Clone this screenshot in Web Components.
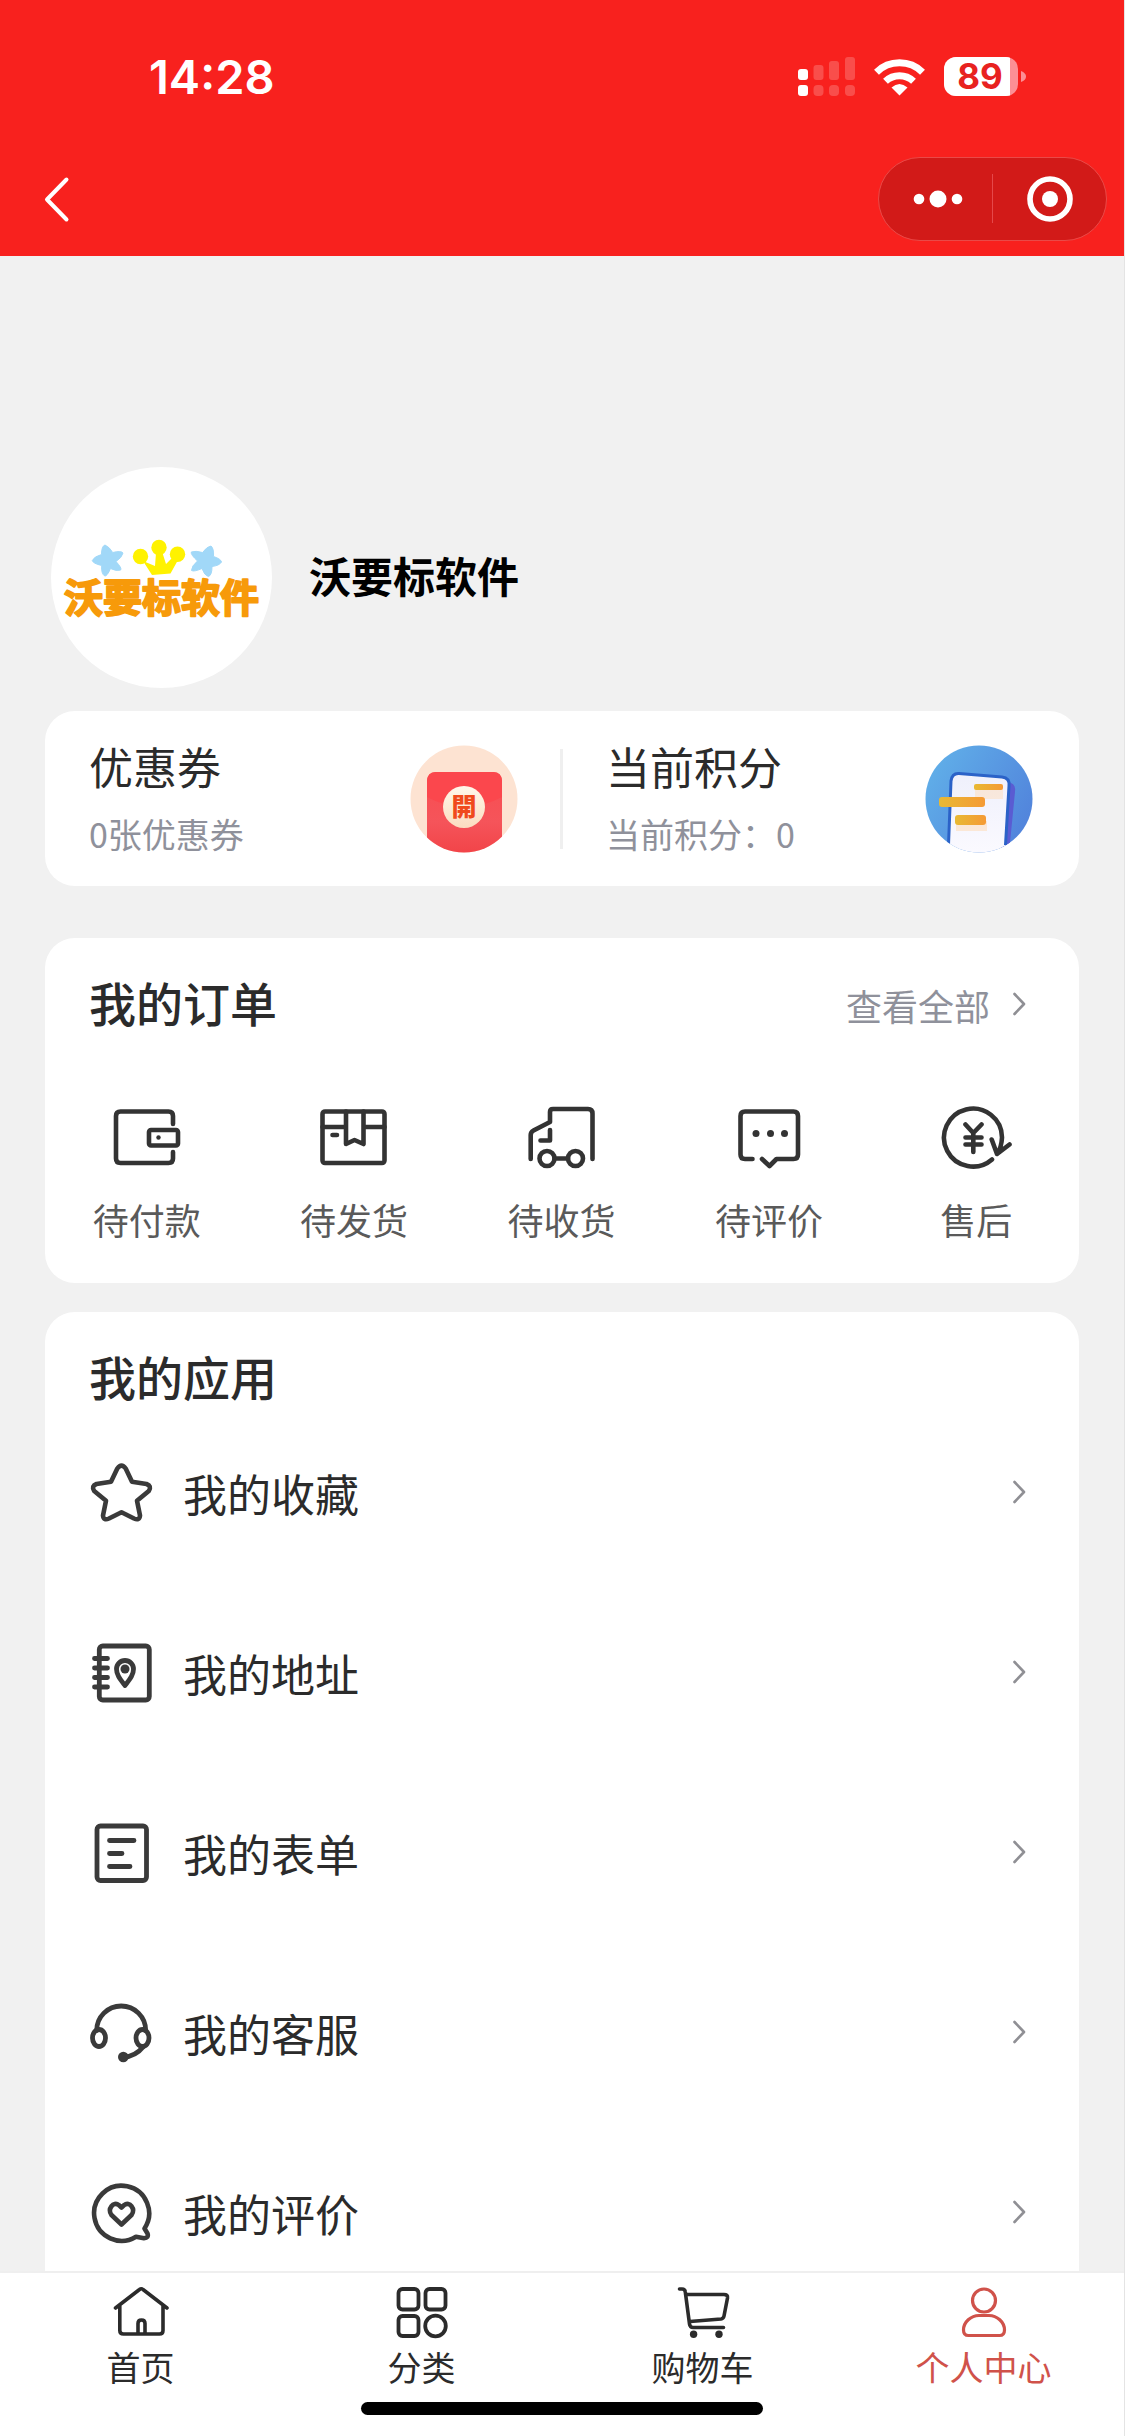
<!DOCTYPE html>
<html lang="zh-CN">
<head>
<meta charset="utf-8">
<meta name="viewport" content="width=device-width, initial-scale=1">
<title>个人中心</title>
<style>
  html, body { margin: 0; height: 100%; }
  body {
    box-sizing: border-box;
    background: #f1f1f1;
    border-right: 1px solid #e4e4e4;
    font-family: "Noto Sans CJK SC", "Noto Sans", sans-serif;
    font-weight: 400;
    color: #2b2b2b;
  }
</style>
</head>
<body>
<member-page>
  <status-bar slot="header" time="14:28" battery="89"></status-bar>
  <nav-bar slot="header"></nav-bar>

  <user-profile name="沃要标软件"></user-profile>

  <asset-panel>
    <asset-item icon="coupon" label="优惠券">0张优惠券</asset-item>
    <asset-item icon="points" label="当前积分">当前积分：0</asset-item>
  </asset-panel>

  <section-card heading="我的订单">
    <more-link slot="action" href="#orders">查看全部</more-link>
    <order-grid>
      <order-item icon="wallet">待付款</order-item>
      <order-item icon="box">待发货</order-item>
      <order-item icon="truck">待收货</order-item>
      <order-item icon="comment">待评价</order-item>
      <order-item icon="refund">售后</order-item>
    </order-grid>
  </section-card>

  <section-card heading="我的应用">
    <app-list>
      <app-row icon="star">我的收藏</app-row>
      <app-row icon="address">我的地址</app-row>
      <app-row icon="form">我的表单</app-row>
      <app-row icon="service">我的客服</app-row>
      <app-row icon="rating">我的评价</app-row>
    </app-list>
  </section-card>

  <tab-bar slot="footer">
    <tab-item icon="home">首页</tab-item>
    <tab-item icon="category">分类</tab-item>
    <tab-item icon="cart">购物车</tab-item>
    <tab-item icon="user" current>个人中心</tab-item>
  </tab-bar>
</member-page>

<script>
const define = (name, render) => customElements.define(name, class extends HTMLElement {
  constructor() { super(); this.attachShadow({ mode: 'open' }); }
  connectedCallback() { this.shadowRoot.innerHTML = render(this); }
});

/* Line icons: [view box side, stroke width, markup] */
const ICONS = {
  wallet: [72, 4.6, `<path d="M62 23V15q0-4.5-4.5-4.5H9.5Q5 10.500 5 15V57.500q0 4.500 4.500 4.500H57.500q4.500 0 4.500-4.500V51"/><rect x="38" y="29" width="29" height="15.500" rx="2"/><circle cx="47.500" cy="36.500" r="2.200" fill="currentColor" stroke="none"/>`],
  box: [72, 4.6, `<rect x="4.500" y="10.500" width="62" height="51.500" rx="2.500"/><path d="M4.500 26H28M45.500 26H66.500M28 10.500V43L36.500 39L45.500 43V10.500M14.500 34H19"/>`],
  truck: [72, 4.6, `<path d="M4.700 58V34Q4.700 31 7.500 29.500L24 21V11Q24 8 27 8H62Q66.500 8 66.500 12.500V58M24 29V39.500H14.500M28.500 57.500H42"/><circle cx="21" cy="57.500" r="7.500"/><circle cx="49.500" cy="57.500" r="7.500"/>`],
  comment: [72, 4.6, `<path d="M19.500 58H12Q7.500 58 7.500 53.500V15Q7.500 10.500 12 10.500H60.500Q65 10.500 65 15V53.500Q65 58 60.500 58H43.500L36.500 65L29 58"/><g fill="currentColor" stroke="none"><circle cx="23" cy="32.500" r="3.500"/><circle cx="37.500" cy="32.500" r="3.500"/><circle cx="51.500" cy="32.500" r="3.500"/></g>`],
  refund: [72, 4.6, `<path d="M52 58.500A29 29 0 1 1 62 36.500Q61.500 46 57.500 52.500M51.700 38.500L57 53L69.500 43.500M25.500 23.500L33.300 32L41.500 23.500M33.300 32V51M25.500 36.500H41.500M25.500 43.500H41.500"/>`],
  star: [64, 4.6, `<path d="M28.300 7.500Q32.500 1.800 36.700 7.500L43 20.700L57.500 23Q63 25 59.800 30L48 39.800L51 54.500Q50.500 60 45 57.500L32.500 51.300L20 57.500Q14.500 60 14 54.500L17 39.800L5.200 30Q2 25 7.500 23L22 20.700Z"/>`],
  address: [64, 4.8, `<rect x="10.300" y="5" width="50" height="54" rx="3.500"/><path d="M5.500 17.500H18.500M5.500 27H18.500M5.500 36.500H18.500M5.500 46H18.500"/><path d="M36 44.500C31 38 27.500 34 27.500 28a8.500 8.500 0 0 1 17 0C44.500 34 41 38 36 44.500Z"/><circle cx="36" cy="28" r="4.500" fill="currentColor" stroke="none"/>`],
  form: [64, 4.8, `<rect x="8" y="5" width="49.500" height="54.500" rx="3.500"/><path d="M20.500 19.500H45M20.500 32.500H33M20.500 45.500H41"/>`],
  service: [64, 4.8, `<path d="M7.700 29.500A24.500 24.500 0 0 1 56.700 29.500"/><ellipse cx="10" cy="37" rx="6.500" ry="8.500"/><ellipse cx="53.500" cy="37" rx="6.500" ry="8.500"/><path d="M54 46Q47 55 34 56.500"/><circle cx="34.300" cy="56" r="5.300" fill="currentColor" stroke="none"/>`],
  rating: [64, 4.6, `<path d="M47 55.700A27.500 27.500 0 1 1 55.500 47.500L58.500 52.500Q60 57 55 57.200Z"/><path d="M32.500 43.500L22.500 34C18 28 24.500 20 29.800 24L32.500 26.500L35.200 24C40.500 20 47 28 42.500 34Z"/>`],
  home: [60, 3.6, `<path d="M4.500 26L28.500 7.500Q30.300 6 32 7.500L56 26M8.800 24V48.500Q8.800 52 12.500 52H48.500Q52 52 52 48.500V24M27 51V41.500Q27 38 30.500 38T34 41.500V51"/>`],
  category: [60, 3.8, `<rect x="6.500" y="7" width="20" height="20.500" rx="4"/><rect x="33.500" y="7" width="20" height="20.500" rx="4"/><rect x="6.500" y="34" width="20" height="20" rx="4"/><circle cx="43.500" cy="44" r="10.300"/>`],
  cart: [60, 3.6, `<path d="M6.500 7H9Q12 7 12.300 10L16.500 42Q17 45.500 20 45.500H50.500M12.500 12.500H51Q55 12.500 54.500 16L51 34Q50.500 36.700 48 37L17 39.500"/><circle cx="20.600" cy="52.300" r="3.700" fill="currentColor" stroke="none"/><circle cx="46" cy="52.300" r="3.700" fill="currentColor" stroke="none"/>`],
  user: [60, 3.2, `<circle cx="30" cy="18.500" r="11.500"/><path d="M9.500 48C9.500 40 17 33.500 25 33.500H35C43 33.500 50.500 40 50.500 48Q50.500 53.500 45.500 53.500H14.500Q9.500 53.500 9.500 48Z"/>`],
};

define('line-icon', el => {
  const [side, stroke, markup] = ICONS[el.getAttribute('name')];
  return `<style>:host{display:block;flex:none}svg{display:block}</style>
  <svg width="${side}" height="${side}" viewBox="0 0 ${side} ${side}" fill="none" stroke="currentColor" stroke-width="${stroke}" stroke-linecap="round" stroke-linejoin="round" aria-hidden="true">${markup}</svg>`;
});

define('chevron-icon', () => `<style>:host{display:block;flex:none;color:#8f8f94}svg{display:block}</style>
  <svg width="36" height="36" viewBox="0 0 36 36" fill="none" stroke="currentColor" stroke-width="2.600" stroke-linecap="round" stroke-linejoin="round" aria-hidden="true"><path d="M14.500 7L24 17L14.500 27"/></svg>`);

/* Round pictures beside the coupon and points totals */
const ART = {
  coupon: `<defs><clipPath id="c"><circle cx="54" cy="54" r="53.500"/></clipPath>
    <linearGradient id="g" x1="0" y1="0" x2="0" y2="1"><stop offset="0" stop-color="#f94c50"/><stop offset=".5" stop-color="#f5545a"/><stop offset="1" stop-color="#f03a3e"/></linearGradient>
    <linearGradient id="k" x1="0" y1="0" x2="0" y2="1"><stop offset="0" stop-color="#fff8ea"/><stop offset="1" stop-color="#fbdcc0"/></linearGradient></defs>
    <g clip-path="url(#c)"><rect width="108" height="108" fill="#fde3d2"/>
    <rect x="17" y="27" width="75" height="100" rx="9" fill="url(#g)"/>
    <path d="M17 52V36q0-9 9-9H83q9 0 9 9V52Q54 72 17 52Z" fill="#fb474d"/></g>
    <circle cx="54" cy="62" r="21" fill="url(#k)"/>
    <text x="54" y="71" text-anchor="middle" font-size="25" font-weight="900" fill="#f04a1c" font-family="'Noto Sans CJK TC','Noto Sans CJK SC',sans-serif">開</text>`,
  points: `<defs><clipPath id="c"><circle cx="54" cy="54" r="53.500"/></clipPath>
    <linearGradient id="s" x1="0" y1="0" x2="1" y2=".6"><stop offset="0" stop-color="#62b4ea"/><stop offset="1" stop-color="#5285dc"/></linearGradient>
    <linearGradient id="o" x1="0" y1="0" x2="1" y2="0"><stop offset="0" stop-color="#e8b934"/><stop offset="1" stop-color="#f59a35"/></linearGradient>
    <linearGradient id="p" x1="0" y1="0" x2="0" y2="1"><stop offset="0" stop-color="#eff0fc"/><stop offset="1" stop-color="#fbfaff"/></linearGradient></defs>
    <g clip-path="url(#c)"><rect width="108" height="108" fill="url(#s)"/>
    <path d="M80 34L86 38Q91 40 90 47L84 108H76Z" fill="#5a5cd2"/>
    <path d="M26 36Q27 28 34 28.500L77 32Q85 33 84 41L80 112H23Z" fill="url(#p)"/>
    <path d="M23.500 100L26 36Q27 28 34 28.500L77 32Q85 33 84 41L80.500 100" fill="none" stroke="#2b62c8" stroke-width="3"/>
    <rect x="50" y="44" width="28" height="10" fill="#fbe3cd" opacity=".7"/>
    <rect x="31" y="76" width="31" height="10" fill="#fbe3cd" opacity=".8"/>
    <rect x="49" y="39" width="29" height="6" rx="2" fill="url(#o)"/>
    <rect x="14" y="52" width="46" height="10" rx="3" fill="url(#o)"/>
    <rect x="30" y="70" width="31" height="10" rx="3" fill="url(#o)"/></g>`,
};

define('member-page', () => `<style>
    :host{display:flex;flex-direction:column;height:100%}
    header{background:#f8211e;color:#fff;flex:none}
    main{flex:1;min-height:0;overflow-y:auto;scrollbar-width:none;padding:0 45px}
    footer{flex:none}
  </style>
  <header><slot name="header"></slot></header><main><slot></slot></main><footer><slot name="footer"></slot></footer>`);

define('status-bar', el => `<style>
    :host{display:flex;box-sizing:border-box;height:141px;padding:12px 98px 0 149px;align-items:center;justify-content:space-between;font-family:Inter,sans-serif}
    time{font-size:47px;line-height:56px;font-weight:600}
    .signs{display:flex;align-items:center;gap:19px}
    svg{display:block}
  </style>
  <time>${el.getAttribute('time')}</time>
  <div class="signs">
    <svg width="57" height="40" viewBox="0 0 57 40" fill="#fff" aria-hidden="true"><rect y="12" width="10" height="11" rx="3"/><rect y="28" width="10" height="11" rx="3"/>
      <g opacity=".2"><rect x="15.500" y="8" width="10" height="15" rx="3"/><rect x="31" y="4" width="10" height="19" rx="3"/><rect x="47" y="0" width="10" height="23" rx="3"/><rect x="15.500" y="28" width="10" height="11" rx="4"/><rect x="31" y="28" width="10" height="11" rx="4"/><rect x="47" y="28" width="10" height="11" rx="4"/></g></svg>
    <svg width="51" height="38" viewBox="0 0 51 38" aria-hidden="true"><g fill="none" stroke="#fff" stroke-width="7"><path d="M2.500 14.200A33 33 0 0 1 48.500 14.200"/><path d="M11.500 23.300A20.500 20.500 0 0 1 39.500 23.300"/></g><path d="M17.500 29.500Q25.500 22.500 33.500 29.500L25.500 37.500Z" fill="#fff"/></svg>
    <svg width="82" height="60" viewBox="0 -10 82 60" role="img" aria-label="电量"><defs><clipPath id="b"><rect width="74" height="39" rx="12"/></clipPath></defs>
      <g clip-path="url(#b)"><rect width="74" height="39" fill="#fc8f95"/><rect width="66" height="39" fill="#fff"/></g>
      <path d="M77 14Q82 16 82 19.500T77 25Z" fill="#fc8f95"/>
      <text x="36" y="32" text-anchor="middle" font-size="35" font-weight="700" fill="#e8221f">${el.getAttribute('battery')}</text></svg>
  </div>`);

define('nav-bar', () => `<style>
    :host{display:flex;height:115px;padding:0 17px 0 32px;align-items:center;justify-content:space-between}
    button{all:unset;display:block;cursor:pointer}
    svg{display:block}
    .capsule{display:flex;align-items:center;box-sizing:border-box;width:229px;height:84px;border:1px solid #ea4a48;border-radius:42px;background:#d21a18}
    .capsule button{flex:1;display:flex;justify-content:center}
    i{width:1px;height:49px;background:#e5484a}
  </style>
  <button aria-label="返回"><svg width="48" height="48" viewBox="0 0 48 48" fill="none" stroke="#fff" stroke-width="4" stroke-linecap="round" stroke-linejoin="round"><path d="M34.500 4.500L15 24.500L34.500 44.500"/></svg></button>
  <div class="capsule">
    <button aria-label="更多"><svg width="54" height="48" viewBox="0 0 54 48" fill="#fff"><circle cx="10" cy="24" r="5.300"/><circle cx="29" cy="24" r="8.500"/><circle cx="48" cy="24" r="5.300"/></svg></button>
    <i></i>
    <button aria-label="关闭"><svg width="48" height="48" viewBox="0 0 48 48"><circle cx="24" cy="24" r="20" fill="none" stroke="#fff" stroke-width="5.600"/><circle cx="24" cy="24" r="8" fill="#fff"/></svg></button>
  </div>`);

define('user-profile', el => `<style>
    :host{display:flex;align-items:center;gap:37px;padding:211px 0 23px 6px}
    svg{display:block;flex:none}
    h1{margin:0;padding-bottom:6px;font-size:42px;line-height:64px;font-weight:700;color:#000}
  </style>
  <svg width="221" height="221" viewBox="0 0 221 221" role="img" aria-label="头像">
    <circle cx="110.500" cy="110.500" r="110.500" fill="#fff"/>
    <g fill="#a1d8f8" stroke="#a1d8f8" stroke-linejoin="round">
      <path d="M50.500 87.500Q50.500 79 54 78Q58.500 80 61.700 85.500Q70 83.500 72 86Q71 90.500 65 94.500Q71 101 69.700 103Q65 104.500 59.500 101.500Q56 109.500 53.700 109Q50 106.500 50.700 98.500Q42 96.500 41.300 93.500Q43 89.500 50.500 87.500Z"/>
      <path d="M151.500 85.500Q156 79.500 160 79Q163 81.500 162.500 89.500Q170 92 170.500 95Q168.500 98.500 161 99.500Q161 108.500 157.300 109.500Q153.500 108.500 151 101.500Q143 105 140.500 103.500Q140.500 99 146.500 94Q139.500 87.500 140.300 85Q144.500 83.500 151.500 85.500Z"/>
    </g>
    <g fill="#fff200"><circle cx="89.500" cy="89.500" r="7.700"/><circle cx="108" cy="80.500" r="7.700"/><circle cx="126.500" cy="87.200" r="7.700"/>
      <path d="M92 94L104 99L105 86H111.500L115 97L121 91L127 93L119.500 106.500L101 108Z"/></g>
    <text x="110.500" y="145" text-anchor="middle" font-size="39" font-weight="700" fill="#f79a0a" stroke="#f79a0a" stroke-width="2" stroke-linejoin="round">${el.getAttribute('name')}</text>
  </svg>
  <h1>${el.getAttribute('name')}</h1>`);

define('asset-panel', () => `<style>
    :host{display:flex;height:175px;padding-right:4px;border-radius:30px;background:#fff;margin-bottom:52px}
  </style><slot></slot>`);

define('asset-item', el => `<style>
    :host{flex:1;display:flex;align-items:center}
    :host(:last-child)::before{content:"";width:3px;height:100px;margin-right:-3px;background:#efefef}
    a{flex:1;display:flex;align-items:center;justify-content:space-between;padding:0 42px 0 44px;color:inherit;text-decoration:none}
    :host(:last-child) a{padding:0 42px 0 46px}
    .text{display:flex;flex-direction:column;gap:12px;padding-bottom:6px}
    b{font-size:44px;line-height:64px;font-weight:400}
    span{font-size:34px;line-height:48px;color:#8f919b}
    svg{display:block;flex:none}
  </style>
  <a href="#${el.getAttribute('icon')}"><div class="text"><b>${el.getAttribute('label')}</b><span><slot></slot></span></div>
  <svg width="108" height="108" viewBox="0 0 108 108" aria-hidden="true">${ART[el.getAttribute('icon')]}</svg></a>`);

define('section-card', el => `<style>
    :host{display:block;background:#fff;border-radius:30px;padding:32px 43px 40px 44px;margin-bottom:29px}
    .head{display:flex;align-items:center;justify-content:space-between}
    h2{margin:0;font-size:47px;line-height:64px;font-weight:500}
  </style>
  <div class="head"><h2>${el.getAttribute('heading')}</h2><slot name="action"></slot></div><slot></slot>`);

define('more-link', el => `<style>
    :host{display:block;padding-top:6px}
    a{display:flex;align-items:center;gap:10px;font-size:36px;line-height:48px;color:#8f919b;text-decoration:none}
  </style><a href="${el.getAttribute('href')}"><slot></slot><chevron-icon></chevron-icon></a>`);

define('order-grid', () => `<style>:host{display:flex;margin:67px -44px 0 -46px}</style><slot></slot>`);

define('order-item', el => `<style>
    :host{flex:1}
    a{display:flex;flex-direction:column;align-items:center;gap:22px;font-size:36px;line-height:48px;color:#5a5a5a;text-decoration:none}
    line-icon{color:#333}
  </style><a href="#${el.getAttribute('icon')}"><line-icon name="${el.getAttribute('icon')}"></line-icon><span><slot></slot></span></a>`);

define('app-list', () => `<style>:host{display:flex;flex-direction:column;gap:116px;margin-top:53px;padding-bottom:52px}</style><slot></slot>`);

define('app-row', el => `<style>
    :host{display:block}
    a{display:flex;align-items:center;font-size:44px;line-height:64px;color:inherit;text-decoration:none}
    span{flex:1;margin-left:30px}
    line-icon{color:#3a3a3a}
  </style><a href="#${el.getAttribute('icon')}"><line-icon name="${el.getAttribute('icon')}"></line-icon><span><slot></slot></span><chevron-icon></chevron-icon></a>`);

define('tab-bar', () => `<style>
    :host{display:block;background:#fff;border-top:2px solid #efefef;padding:9px 0 21px}
    nav{display:flex}
    .indicator{width:402px;height:13px;border-radius:7px;background:#000;margin:11px auto 0}
  </style><nav><slot></slot></nav><div class="indicator"></div>`);

define('tab-item', el => `<style>
    :host{flex:1;color:#2b2b2b}
    :host([current]){color:#d0524a}
    a{display:flex;flex-direction:column;align-items:center;gap:1px;font-size:34px;line-height:48px;color:inherit;text-decoration:none}
  </style><a href="#${el.getAttribute('icon')}"><line-icon name="${el.getAttribute('icon')}"></line-icon><span><slot></slot></span></a>`);
</script>
</body>
</html>
